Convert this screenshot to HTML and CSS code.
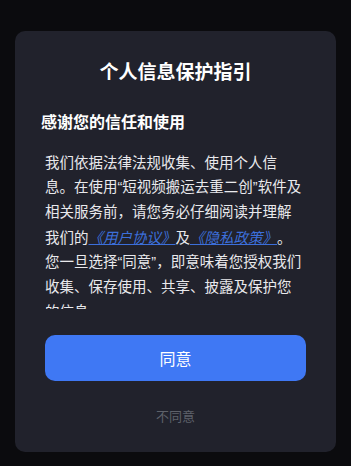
FILE: index.html
```html
<!DOCTYPE html>
<html lang="zh-CN">
<head>
  <meta charset="UTF-8">
  <meta name="viewport" content="width=device-width, initial-scale=1.0">
  <title>个人信息保护指引</title>
  <link rel="stylesheet" href="styles.css">
</head>
<body>
  <div class="dialog">
    <h1 class="dialog-title">个人信息保护指引</h1>
    <h2 class="dialog-subtitle">感谢您的信任和使用</h2>
    <div class="dialog-body">
      <p>我们依据法律法规收集、使用个人信息。在使用“短视频搬运去重二创”软件及相关服务前，请您务必仔细阅读并理解我们的<a href="#">《用户协议》</a>及<a href="#">《隐私政策》</a>。您一旦选择“同意”，即意味着您授权我们收集、保存使用、共享、披露及保护您的信息。</p>
    </div>
    <button class="btn-agree">同意</button>
    <button class="btn-disagree">不同意</button>
  </div>
</body>
</html>
```

FILE: styles.css
```css
:root {
  --bg-page: #0b0b0e;
  --bg-dialog: #21222c;
  --text-main: #e9e9ec;
  --text-muted: #5e616a;
  --link: #3c6fda;
  --primary: #3f78f4;
}
* { box-sizing: border-box; margin: 0; padding: 0; }
html, body { height: 100%; }
body {
  background: var(--bg-page);
  padding: 31px 15px;
  font-family: "Liberation Sans", "Noto Sans CJK SC", sans-serif;
  color: var(--text-main);
  overflow: hidden;
}
/* Dialog card */
.dialog {
  width: 321px;
  background: var(--bg-dialog);
  border-radius: 10px;
  padding: 30px 30px 24px;
  display: flex;
  flex-direction: column;
}
.dialog-title {
  font-size: 19px;
  line-height: 24px;
  font-weight: 700;
  text-align: center;
  color: #fff;
}
.dialog-subtitle {
  margin: 27px 0 0 -4px;
  font-size: 16px;
  line-height: 22px;
  font-weight: 700;
  color: #fff;
}
/* Scrollable agreement text */
.dialog-body {
  margin-top: 16.5px;
  height: 158px;
  overflow: hidden;
}
.dialog-body p {
  padding-right: 3px;
  font-size: 14.5px;
  line-height: 24.7px;
  color: var(--text-main);
  text-spacing-trim: space-all;
}
.dialog-body a {
  font-family: "Noto Sans CJK SC", sans-serif;
  color: var(--link);
  font-style: italic;
  text-decoration: underline;
}
/* Buttons */
button {
  border: none;
  background: none;
  font-family: inherit;
  cursor: pointer;
}
.btn-agree {
  margin-top: 26.5px;
  height: 46px;
  border-radius: 10px;
  background: var(--primary);
  color: #fff;
  font-size: 16px;
}
.btn-disagree {
  margin-top: 25px;
  line-height: 22px;
  font-size: 13px;
  color: var(--text-muted);
}
```
